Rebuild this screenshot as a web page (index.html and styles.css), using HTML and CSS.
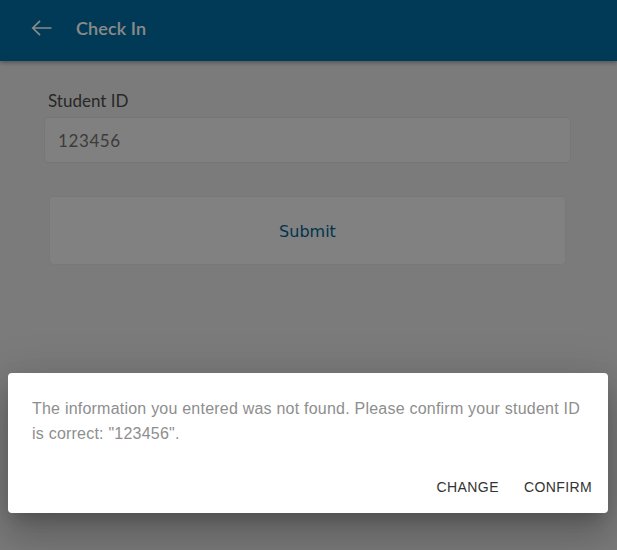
FILE: index.html
```html
<!DOCTYPE html>
<html>
<head>
<meta charset="utf-8">
<link rel="stylesheet" href="styles.css">
</head>
<body>
<div class="app">
  <header class="bar">
    <svg class="back" width="21" height="18" viewBox="0 0 21 18"><path d="M20.5 9H2M9 1.8L1.8 9 9 16.2" fill="none" stroke="#fff" stroke-width="1.7"/></svg>
    <span class="title">Check In</span>
  </header>
  <main class="content">
    <label class="label">Student ID</label>
    <div class="input">123456</div>
    <div class="submit">Submit</div>
  </main>
  <div class="overlay"></div>
  <div class="dialog">
    <p class="msg">The information you entered was not found. Please confirm your student ID is correct: "123456".</p>
    <div class="actions">
      <span class="btn">CHANGE</span>
      <span class="btn">CONFIRM</span>
    </div>
  </div>
</div>
</body>
</html>
```
FILE: styles.css
```css
html, body { margin: 0; padding: 0; }
body { width: 617px; height: 550px; overflow: hidden; font-family: Lato, "Open Sans", sans-serif; }
.app { position: relative; width: 617px; height: 550px; background: #e4e4e4; }
.bar { height: 61px; background: #006ba0; display: flex; align-items: center; padding-left: 31px; box-shadow: 0 2px 4px rgba(0,0,0,0.3); position: relative; box-sizing: border-box; padding-bottom: 5px; }
.back { margin-right: 24px; }
.title { color: #fff; font-family: Lato, sans-serif; font-size: 18px; font-weight: 600; letter-spacing: 0.1px; }
.content { padding: 28px 46px 0 44px; }
.label { display: block; font-family: Lato, sans-serif; font-size: 17px; color: #4a4a4a; margin-left: 4px; line-height: 24px; margin-top: 0; }
.input { margin-top: 4px; height: 44px; border: 1px solid #dcdcdc; border-radius: 4px; background: #ececec; font-family: Lato, sans-serif; font-size: 17px; color: #707070; padding-left: 13px; line-height: 46px; letter-spacing: 0.6px; }
.submit { margin: 33px 5px 0 5px; border: 1px solid #dedede; border-radius: 4px; background: #eeeeee; display: flex; align-items: center; justify-content: center; color: #00628f; font-family: "DejaVu Sans", sans-serif; font-size: 16px; padding-top: 2px; box-sizing: border-box; height: 69px; }
.overlay { position: absolute; inset: 0; background: rgba(0,0,0,0.46); }
.dialog { position: absolute; left: 8px; top: 373px; width: 600px; height: 140px; background: #fff; border-radius: 4px; box-shadow: 0 11px 15px -7px rgba(0,0,0,0.2), 0 24px 38px 3px rgba(0,0,0,0.14), 0 9px 46px 8px rgba(0,0,0,0.12); box-sizing: border-box; padding: 23px 16px 0 24px; }
.msg { margin: 0 8px 0 0; font-family: "Liberation Sans", Arial, sans-serif; font-size: 16px; line-height: 25px; color: #8e8e8e; letter-spacing: 0.22px; }
.actions { display: flex; justify-content: flex-end; gap: 25px; margin-top: 33px; }
.btn { font-family: "Liberation Sans", Arial, sans-serif; font-size: 14px; color: #333; letter-spacing: 0.4px; line-height: 16px; }
```
